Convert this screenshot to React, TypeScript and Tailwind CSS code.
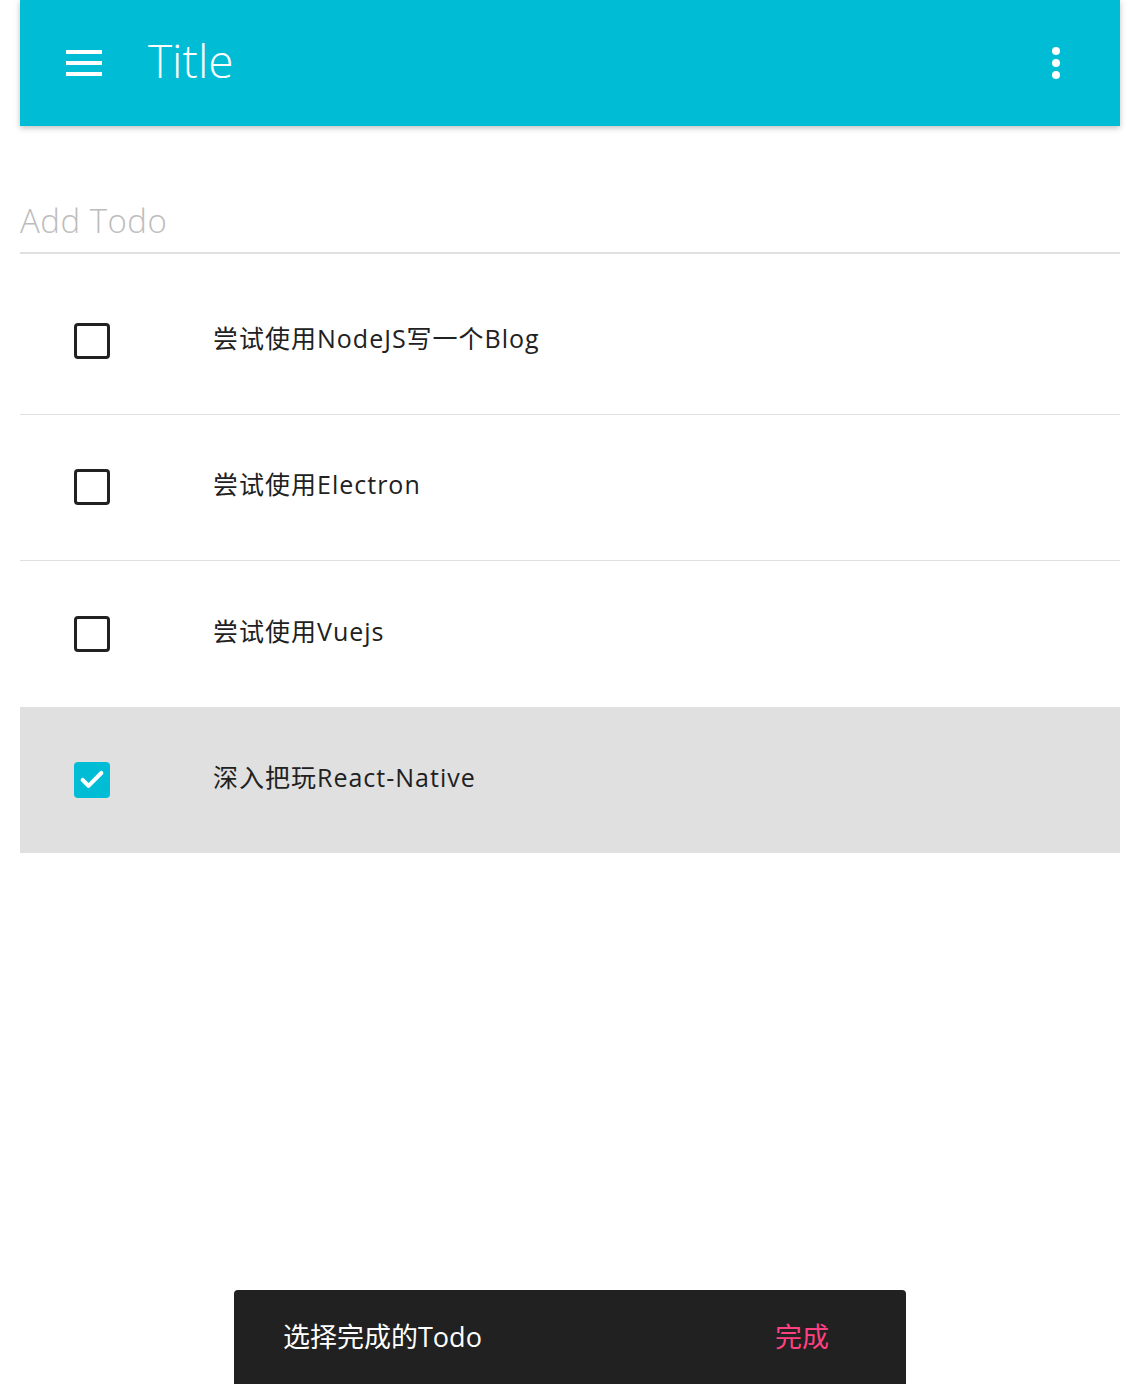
import { Check } from 'lucide-react';

const todos = [
  { id: 1, text: '尝试使用NodeJS写一个Blog', done: false },
  { id: 2, text: '尝试使用Electron', done: false },
  { id: 3, text: '尝试使用Vuejs', done: false },
  { id: 4, text: '深入把玩React-Native', done: true },
];

const font = { fontFamily: '"Open Sans", "Noto Sans CJK SC", sans-serif' };

function AppBar() {
  return (
    <div className="flex h-[126px] items-center bg-[#00bcd4] pl-[46px] pr-[60px] shadow-[0_2px_6px_rgba(0,0,0,0.25)]">
      <div className="flex h-[26px] w-[36px] flex-col justify-between">
        <div className="h-[4px] bg-white" />
        <div className="h-[4px] bg-white" />
        <div className="h-[4px] bg-white" />
      </div>
      <div className="ml-[46px] mb-[6px] flex-1 text-[46px] font-light text-white">Title</div>
      <div className="flex flex-col gap-[4px]">
        <div className="h-[8px] w-[8px] rounded-full bg-white" />
        <div className="h-[8px] w-[8px] rounded-full bg-white" />
        <div className="h-[8px] w-[8px] rounded-full bg-white" />
      </div>
    </div>
  );
}

export default function App() {
  return (
    <div className="relative h-[1384px] overflow-hidden bg-white" style={font}>
      <div className="ml-[20px] w-[1100px]">
        <AppBar />

        <div className="mt-[70px] border-b-2 border-[#e0e0e0] pb-[6px]">
          <input
            placeholder="Add Todo"
            className="w-full bg-transparent text-[33px] font-light tracking-[0.5px] text-[#212121] outline-none placeholder:text-[#bdbdbd]"
          />
        </div>

        <div className="pt-[15px]">
          {todos.map((todo, i) => (
            <div
              key={todo.id}
              className={
                'flex h-[146px] items-center ' +
                (todo.done ? 'bg-[#e0e0e0] ' : '') +
                (i < todos.length - 1 && !todos[i + 1].done ? 'border-b border-[#e0e0e0]' : '')
              }
            >
              <div className="ml-[54px] w-[139px] shrink-0">
                {todo.done ? (
                  <div className="flex h-[36px] w-[36px] items-center justify-center rounded-[4px] bg-[#00bcd4]">
                    <Check className="h-[28px] w-[28px] text-white" strokeWidth={3.5} />
                  </div>
                ) : (
                  <div className="h-[36px] w-[36px] rounded-[4px] border-[3.5px] border-[#212121]" />
                )}
              </div>
              <div className="mb-[4px] text-[25px] tracking-[1px] text-[#212121]">{todo.text}</div>
            </div>
          ))}
        </div>
      </div>

      <div className="absolute bottom-0 left-[234px] flex h-[94px] w-[672px] items-center justify-between rounded-t-[4px] bg-[#212121] pl-[49px] pr-[77px]">
        <span className="text-[27px] text-white">选择完成的Todo</span>
        <span className="text-[27px] text-[#ff4081]">完成</span>
      </div>
    </div>
  );
}
